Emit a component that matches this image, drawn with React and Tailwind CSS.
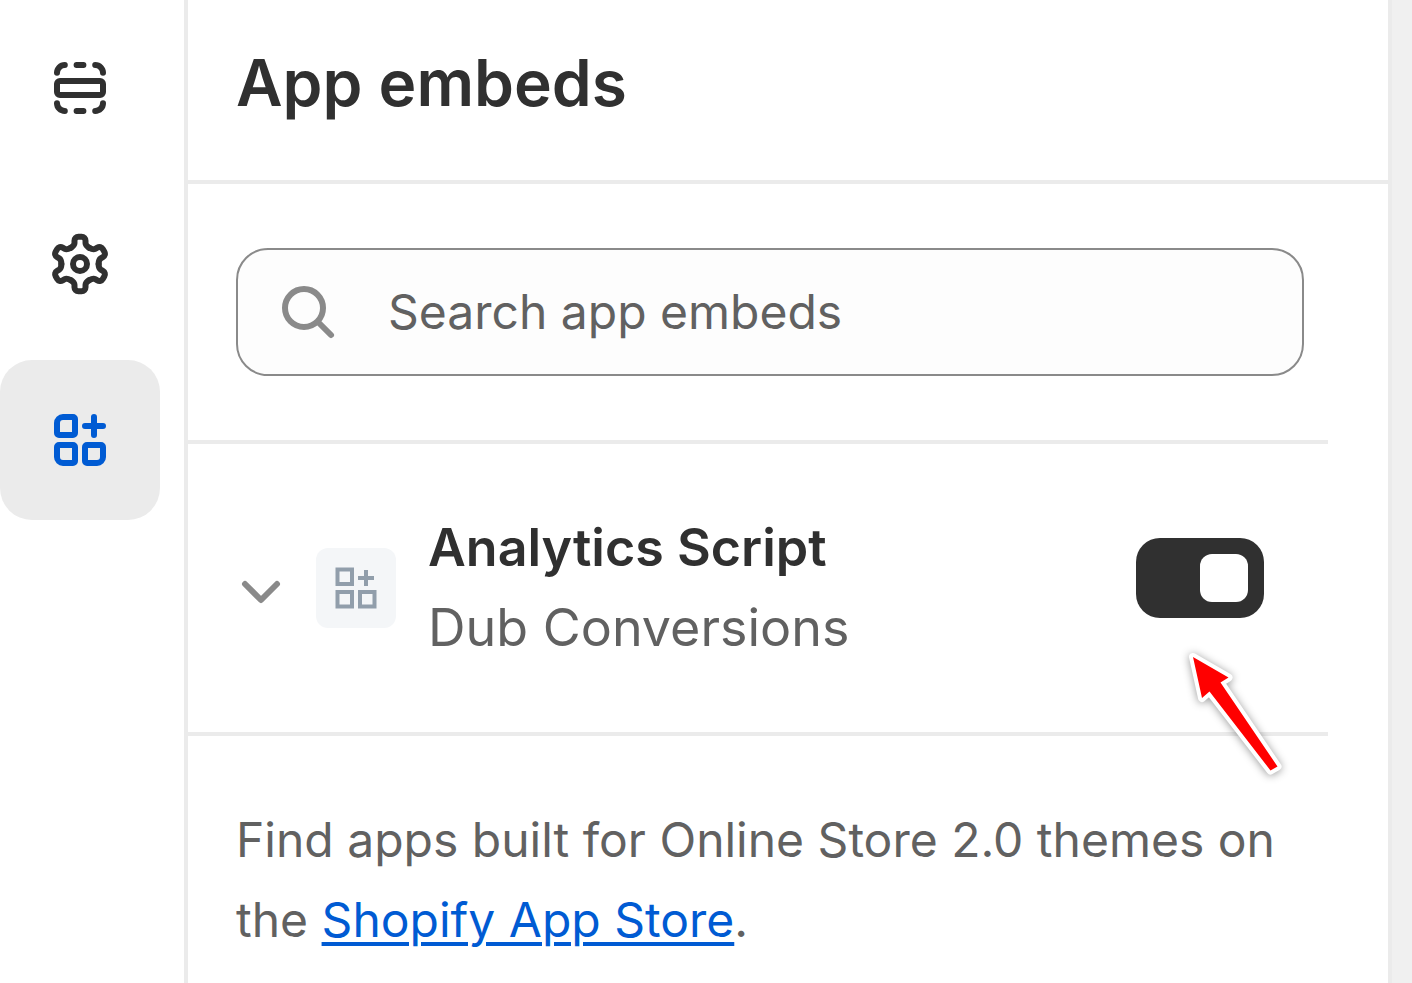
const TOOTH_ANGLES = [0, 60, 120, 180, 240, 300];

function SectionsIcon() {
  return (
    <svg viewBox="0 0 20 20" className="size-20" fill="none" stroke="currentColor" strokeWidth="1.5" strokeLinecap="round" aria-hidden="true">
      <path d="M4.25 6.2a1.95 1.95 0 0 1 1.95-1.95M9.15 4.25h1.7M13.8 4.25a1.95 1.95 0 0 1 1.95 1.95M4.25 13.8a1.95 1.95 0 0 0 1.95 1.95M9.15 15.75h1.7M13.8 15.75a1.95 1.95 0 0 0 1.95-1.95" />
      <rect x="4.25" y="8.25" width="11.5" height="3.5" rx="0.75" />
    </svg>
  );
}

function GearIcon() {
  return (
    <svg viewBox="0 0 20 20" className="size-20" fill="none" stroke="currentColor" strokeWidth="1.5" strokeLinecap="round" aria-hidden="true">
      <circle cx="10" cy="10" r="1.75" />
      {TOOTH_ANGLES.map((angle) => (
        <path
          key={angle}
          transform={`translate(10 10) rotate(${angle})`}
          d="M-2.33-4.03C-1.75-4.37-1.4-4.6-1.38-5.2V-5.8C-1.38-6.4-.95-6.8-.4-6.8H.4C.95-6.8 1.38-6.4 1.38-5.8V-5.2C1.4-4.6 1.75-4.37 2.33-4.03"
        />
      ))}
    </svg>
  );
}

function AppsIcon() {
  return (
    <svg viewBox="0 0 20 20" className="size-20" fill="none" stroke="currentColor" strokeWidth="1.5" strokeLinecap="round" aria-hidden="true">
      <path d="M5.75 4.25h2.5a.5.5 0 0 1 .5.5v3.5a.5.5 0 0 1-.5.5h-3.5a.5.5 0 0 1-.5-.5v-2.5a1.5 1.5 0 0 1 1.5-1.5Z" />
      <path d="M4.75 11.25h3.5a.5.5 0 0 1 .5.5v3.5a.5.5 0 0 1-.5.5h-2.5a1.5 1.5 0 0 1-1.5-1.5v-2.5a.5.5 0 0 1 .5-.5Z" />
      <path d="M11.75 11.25h3.5a.5.5 0 0 1 .5.5v2.5a1.5 1.5 0 0 1-1.5 1.5h-2.5a.5.5 0 0 1-.5-.5v-3.5a.5.5 0 0 1 .5-.5Z" />
      <path d="M13.5 4.25v4.5M11.25 6.5h4.5" />
    </svg>
  );
}

function AppTileIcon() {
  return (
    <svg viewBox="0 0 80 80" className="size-20 rounded-xl bg-[#f4f6f8] text-[#919eab]" fill="none" stroke="currentColor" strokeWidth="4" aria-hidden="true">
      <path d="M21.5 21.5h14.5v14.5h-14.5zM21.5 44h14.5v14.5h-14.5zM44 44h14.5v14.5h-14.5zM50 22v16M42 30h16" />
    </svg>
  );
}

function SearchIcon() {
  return (
    <svg viewBox="0 0 80 80" className="size-20 shrink-0 text-[#8a8a8a]" fill="none" stroke="currentColor" strokeLinecap="round" aria-hidden="true">
      <circle cx="36" cy="36" r="19" strokeWidth="6" />
      <path d="M50 50l13 13" strokeWidth="6" />
    </svg>
  );
}

function ChevronIcon() {
  return (
    <svg viewBox="0 0 50 80" className="h-20 w-full" fill="none" stroke="currentColor" strokeWidth="6" strokeLinecap="round" strokeLinejoin="round" aria-hidden="true">
      <path d="M9 36l16 16 16-16" />
    </svg>
  );
}

function PointerArrow() {
  return (
    <svg viewBox="0 0 110 140" className="pointer-events-none absolute top-50 right-10 h-[140px] w-[110px] drop-shadow-[0_1px_4px_rgba(0,0,0,0.4)]" aria-hidden="true">
      <path
        d="M15 13l35.5 20.5-8 5 57 84-7 4-61-79-7.5 6.5z"
        fill="#fff"
        stroke="#fff"
        strokeWidth="8"
        strokeLinejoin="round"
      />
      <path d="M15 13l35.5 20.5-8 5 57 84-7 4-61-79-7.5 6.5z" fill="#f00" />
    </svg>
  );
}

const NAV_ITEMS = [
  { label: "Sections", Icon: SectionsIcon, active: false },
  { label: "Theme settings", Icon: GearIcon, active: false },
  { label: "App embeds", Icon: AppsIcon, active: true },
];

export default function App() {
  return (
    <div className="flex min-h-screen bg-[#f0f0f0] font-['Inter',sans-serif] text-[#303030]">
      <nav aria-label="Editor" className="flex shrink-0 flex-col gap-4 border-r-4 border-[#ebebeb] bg-white pt-2 pr-6">
        {NAV_ITEMS.map(({ label, Icon, active }) => (
          <button
            key={label}
            type="button"
            aria-label={label}
            aria-current={active ? "page" : undefined}
            className={
              active
                ? "flex size-40 items-center justify-center rounded-4xl bg-[#ebebeb] text-[#005bd3]"
                : "flex size-40 items-center justify-center rounded-4xl"
            }
          >
            <Icon />
          </button>
        ))}
      </nav>

      <main className="mr-5 min-w-0 flex-1 border-r-4 border-[#ebebeb] bg-white">
        <header className="border-b-4 border-[#ebebeb] px-12 pt-[43px] pb-[57px]">
          <h1 className="text-[64px] leading-[80px] font-[625]">App embeds</h1>
        </header>

        <div className="mr-15">
          <div className="border-b-4 border-[#ebebeb] py-16 pr-6 pl-12">
            <label className="flex h-32 items-center gap-10 rounded-4xl border-2 border-[#8a8a8a] bg-[#fdfdfd] px-7.5">
              <SearchIcon />
              <input
                type="text"
                aria-label="Search app embeds"
                placeholder="Search app embeds"
                className="min-w-0 flex-1 bg-transparent text-[48px] leading-[80px] font-[425] outline-none placeholder:text-[#616161]"
              />
            </label>
          </div>

          <section className="relative flex items-center border-b-4 border-[#ebebeb] py-16 pr-16 pl-12">
            <button type="button" aria-label="Expand Analytics Script" className="mr-[30px] w-[50px] text-[#8a8a8a]">
              <ChevronIcon />
            </button>
            <AppTileIcon />
            <div className="ml-8 min-w-0 flex-1 text-[52px] leading-[80px]">
              <h2 className="font-[625]">Analytics Script</h2>
              <p className="font-[425] text-[#616161]">Dub Conversions</p>
            </div>
            <button
              type="button"
              role="switch"
              aria-checked="true"
              aria-label="Enable Analytics Script"
              className="mb-5 flex h-20 w-32 items-center justify-end rounded-3xl bg-[#303030] p-4"
            >
              <span className="size-12 rounded-xl bg-white" />
            </button>
            <PointerArrow />
          </section>
        </div>

        <p className="py-16 pr-20 pl-12 text-[48px] leading-[80px] font-[425] text-[#616161]">
          Find apps built for Online Store 2.0 themes on the{" "}
          <a href="#app-store" className="text-[#005bd3] underline decoration-4 underline-offset-[5px]">
            Shopify App Store
          </a>
          .
        </p>
      </main>
    </div>
  );
}
